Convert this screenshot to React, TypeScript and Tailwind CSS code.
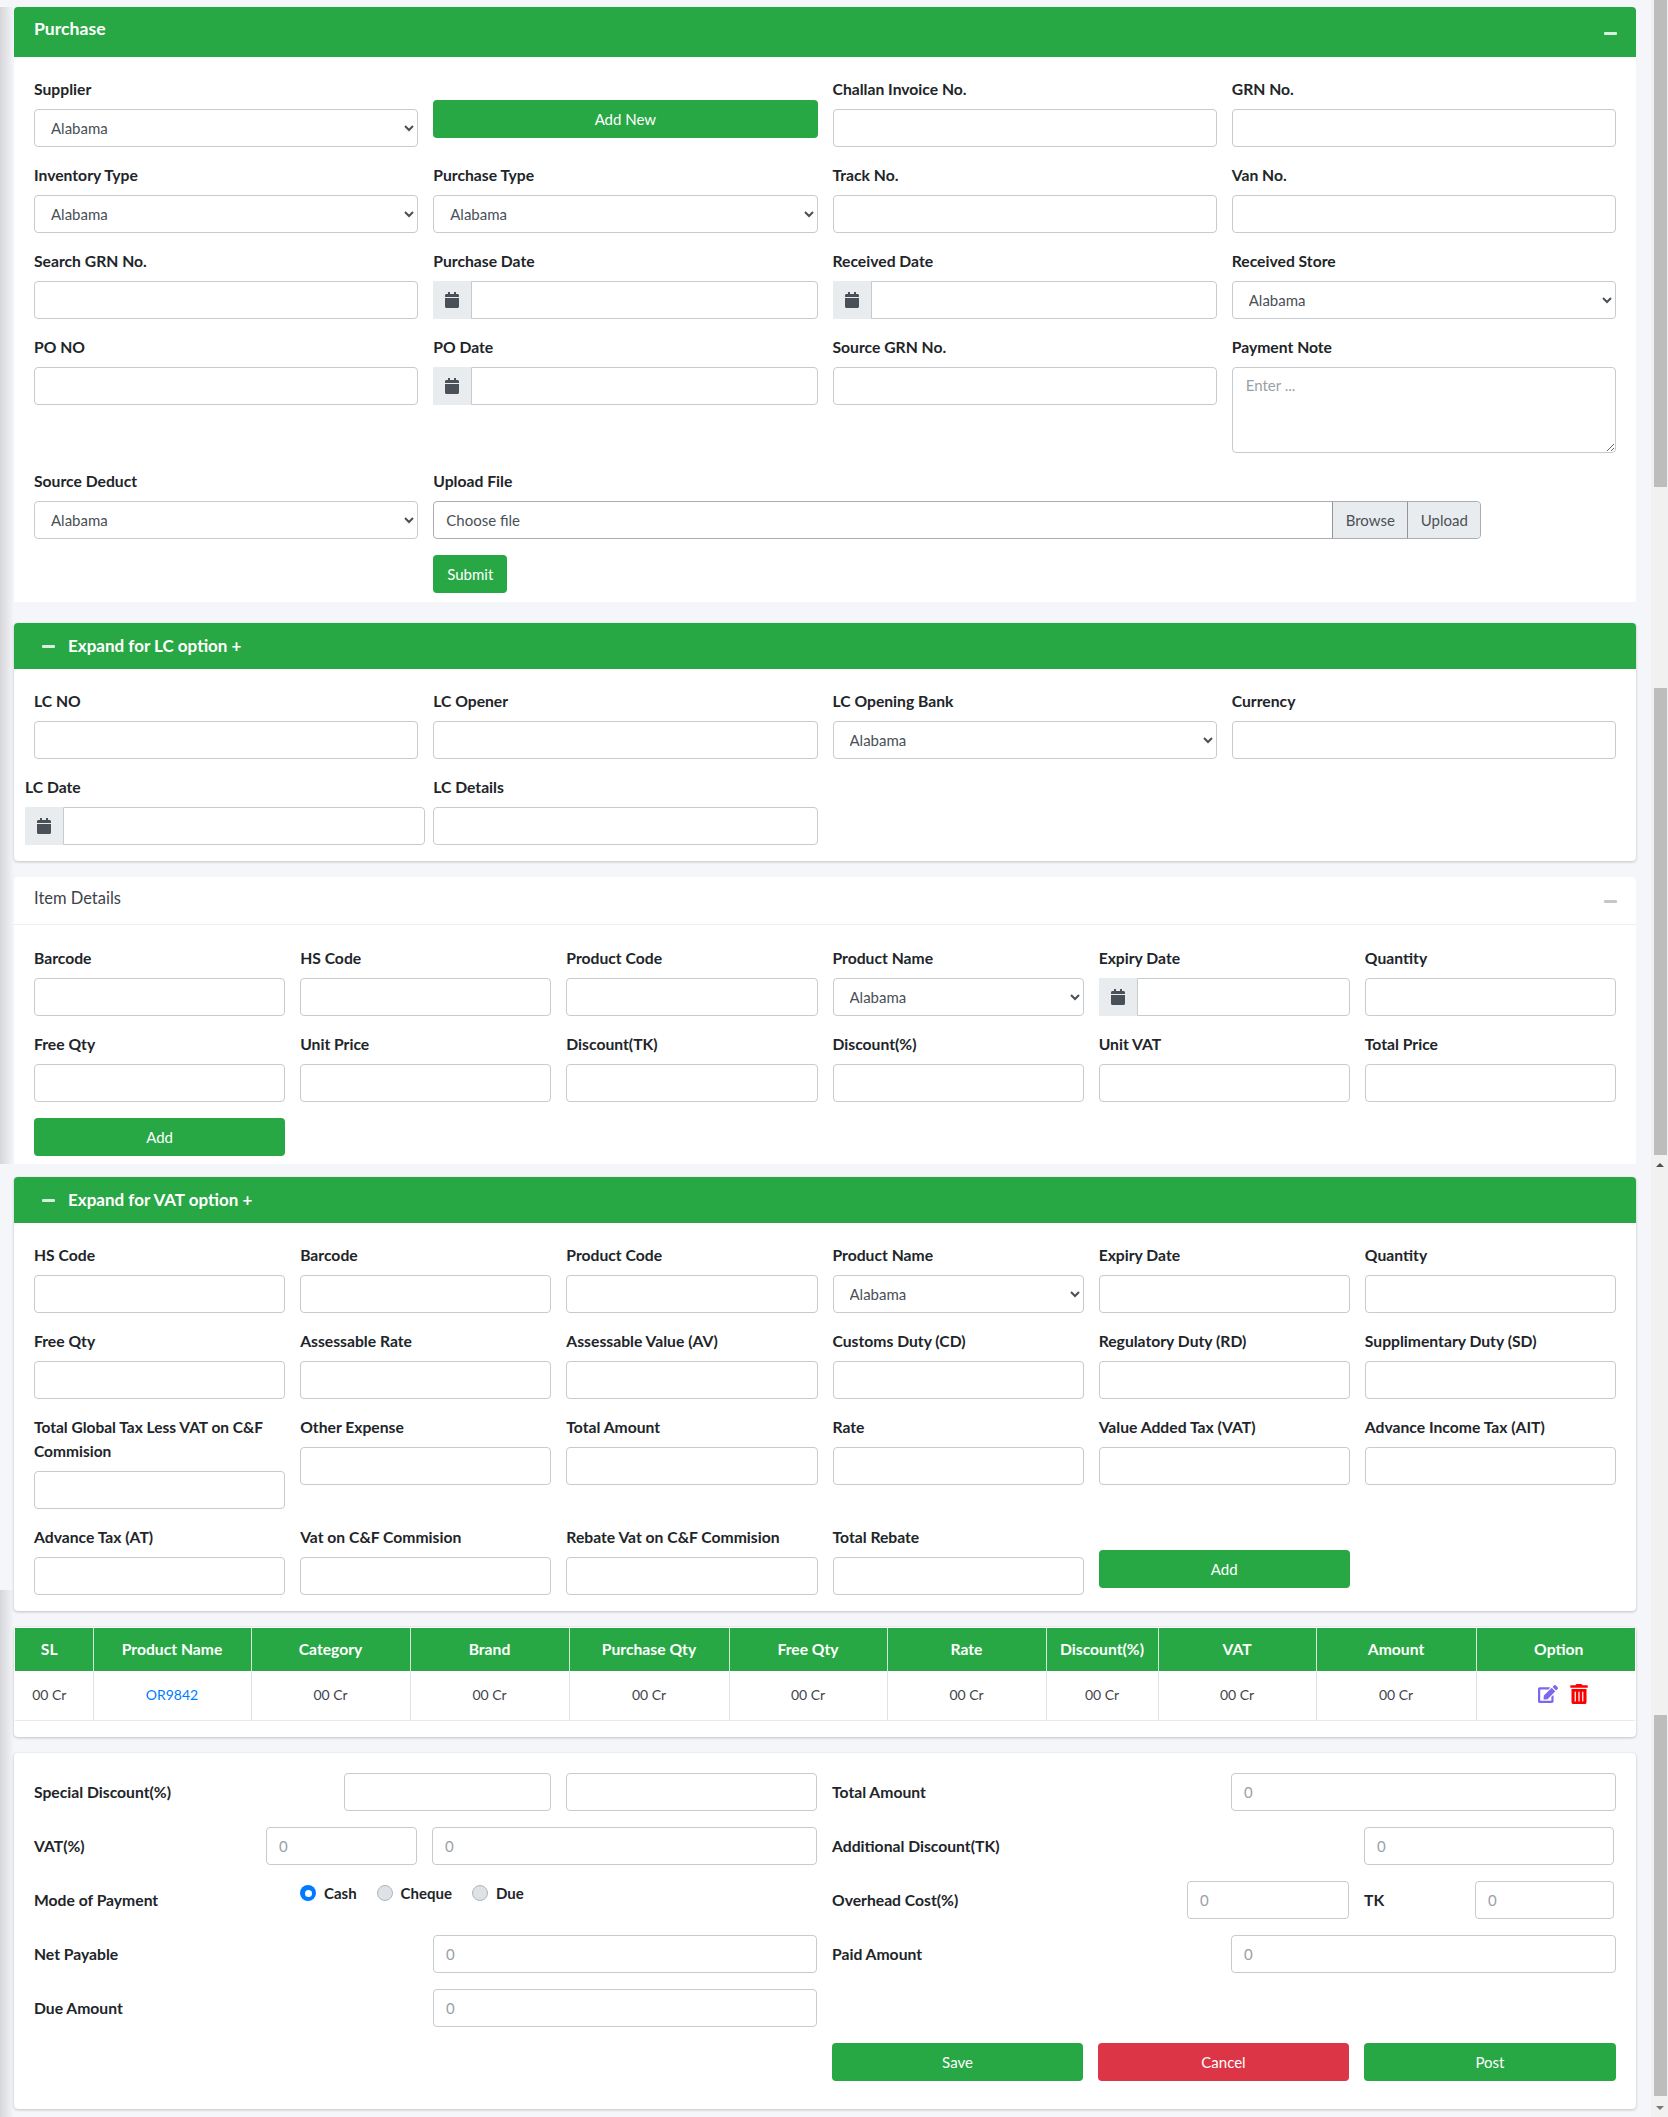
import type { ReactNode } from 'react'
import { FaCalendar, FaEdit, FaTrashAlt } from 'react-icons/fa'

const inputClass =
  'block w-full h-[38px] px-3 bg-white border border-[#c6cbd0] rounded-[4px] text-[15px] text-[#495057] placeholder:text-[#9aa0a6]'

function Label({ children, className = '' }: { children: ReactNode; className?: string }) {
  return <div className={`h-6 mb-2 leading-6 text-[15.7px] font-bold text-[#212529] whitespace-nowrap ${className}`}>{children}</div>
}

function TextInput({ placeholder, className = '' }: { placeholder?: string; className?: string }) {
  return <input type="text" placeholder={placeholder} className={`${inputClass} ${className}`} />
}

function SelectInput() {
  return (
    <select className={inputClass} defaultValue="Alabama">
      <option>Alabama</option>
    </select>
  )
}

function DateInput() {
  return (
    <div className="flex h-[38px]">
      <span className="flex w-[38px] shrink-0 items-center justify-center bg-[#e9ecef] text-[#495057]">
        <FaCalendar size={16} />
      </span>
      <input type="text" className="h-[38px] min-w-0 flex-1 bg-white border border-[#c6cbd0] rounded-r-[4px]" />
    </div>
  )
}

function Field({ label, children, className = '' }: { label?: ReactNode; children?: ReactNode; className?: string }) {
  return (
    <div className={className}>
      <Label>{label}</Label>
      {children ?? <TextInput />}
    </div>
  )
}

function Btn({ children, className = '', red }: { children: ReactNode; className?: string; red?: boolean }) {
  return (
    <button className={`block h-[38px] rounded-[4px] text-[15px] text-white ${red ? 'bg-[#dc3545]' : 'bg-[#28a745]'} ${className}`}>
      {children}
    </button>
  )
}

function Minus({ className }: { className: string }) {
  return <span className={`block w-[13px] h-[3px] rounded-[1px] ${className}`} />
}

function ExpandHeader({ title }: { title: string }) {
  return (
    <div className="flex h-[46px] items-center gap-[13px] pl-7 bg-[#28a745] rounded-t-[4px] text-white text-[17px] font-bold">
      <Minus className="bg-[#d9efdd]" />
      {title}
    </div>
  )
}

const tableCols = [
  ['SL', 'w-[78px] pr-[9px]'],
  ['Product Name', 'w-[158px]'],
  ['Category', 'w-[159px]'],
  ['Brand', 'w-[159px]'],
  ['Purchase Qty', 'w-[160px]'],
  ['Free Qty', 'w-[158px]'],
  ['Rate', 'w-[159px]'],
  ['Discount(%)', 'w-[112px]'],
  ['VAT', 'w-[158px]'],
  ['Amount', 'w-[160px]'],
  ['Option', 'w-[159px] pl-[6px]'],
]

const cardShadow = 'shadow-[0_0_1px_rgba(0,0,0,0.125),0_1px_3px_rgba(0,0,0,0.2)]'

function PurchaseCard() {
  return (
    <section className="mt-[7px] bg-white rounded-t-[4px]">
      <div className="flex h-[50px] items-center justify-between pl-5 pr-[19px] bg-[#28a745] rounded-t-[4px] text-white text-[17.6px] font-bold">
        <span className="-mt-[5px]">Purchase</span>
        <Minus className="bg-[#d9efdd] mt-[2px]" />
      </div>
      <div className="px-5 pt-5 pb-[9px]">
        <div className="grid grid-cols-4 gap-x-[15px] gap-y-4">
          <Field label="Supplier"><SelectInput /></Field>
          <div className="pt-[23px]"><Btn className="w-full">Add New</Btn></div>
          <Field label="Challan Invoice No." />
          <Field label="GRN No." />

          <Field label="Inventory Type"><SelectInput /></Field>
          <Field label="Purchase Type"><SelectInput /></Field>
          <Field label="Track No." />
          <Field label="Van No." />

          <Field label="Search GRN No." />
          <Field label="Purchase Date"><DateInput /></Field>
          <Field label="Received Date"><DateInput /></Field>
          <Field label="Received Store"><SelectInput /></Field>

          <Field label="PO NO" />
          <Field label="PO Date"><DateInput /></Field>
          <Field label="Source GRN No." />
          <Field label="Payment Note">
            <textarea
              placeholder="Enter ..."
              className="block w-full h-[86px] px-[13px] py-[6px] bg-white border border-[#c6cbd0] rounded-[4px] text-[15px] placeholder:text-[#9aa0a6]"
            />
          </Field>

          <Field label="Source Deduct"><SelectInput /></Field>
          <div className="col-span-3">
            <Label>Upload File</Label>
            <div className="flex h-[38px] w-[1048px] border border-[#a9adb3] rounded-[4px] text-[15px] text-[#495057]">
              <span className="flex-1 pl-3 leading-[36px]">Choose file</span>
              <span className="w-[75px] text-center leading-[36px] bg-[#e9ecef] border-l border-[#8f959b]">Browse</span>
              <span className="w-[73px] text-center leading-[36px] bg-[#e9ecef] border-l border-[#8f959b] rounded-r-[4px]">Upload</span>
            </div>
            <Btn className="w-[74px] mt-4">Submit</Btn>
          </div>
        </div>
      </div>
    </section>
  )
}

function LcCard() {
  return (
    <section className={`mt-[21px] bg-white rounded-[4px] ${cardShadow}`}>
      <ExpandHeader title="Expand for LC option +" />
      <div className="px-5 pt-5 pb-4">
        <div className="grid grid-cols-4 gap-x-[15px] gap-y-4">
          <Field label="LC NO" />
          <Field label="LC Opener" />
          <Field label="LC Opening Bank"><SelectInput /></Field>
          <Field label="Currency" />
          <Field label="LC Date" className="-ml-[9px] -mr-[7px]"><DateInput /></Field>
          <Field label="LC Details" />
        </div>
      </div>
    </section>
  )
}

function ItemCard() {
  return (
    <section className="mt-4 bg-white rounded-t-[4px]">
      <div className="flex h-[48px] items-center justify-between pl-5 pr-[19px] pb-1 border-b border-[#edeef0] text-[16.5px] text-[#3d4349]">
        <span>Item Details</span>
        <Minus className="bg-[#c4c7ca] mt-[6px] h-[2px]" />
      </div>
      <div className="px-5 pt-[21px] pb-2">
        <div className="grid grid-cols-6 gap-x-[15px] gap-y-4">
          <Field label="Barcode" />
          <Field label="HS Code" />
          <Field label="Product Code" />
          <Field label="Product Name"><SelectInput /></Field>
          <Field label="Expiry Date"><DateInput /></Field>
          <Field label="Quantity" />
          <Field label="Free Qty" />
          <Field label="Unit Price" />
          <Field label="Discount(TK)" />
          <Field label="Discount(%)" />
          <Field label="Unit VAT" />
          <Field label="Total Price" />
          <Btn className="w-full">Add</Btn>
        </div>
      </div>
    </section>
  )
}

function VatCard() {
  return (
    <section className={`mt-[13px] bg-white rounded-[4px] ${cardShadow}`}>
      <ExpandHeader title="Expand for VAT option +" />
      <div className="px-5 pt-5">
        <div className="grid grid-cols-6 gap-x-[15px] gap-y-4">
          <Field label="HS Code" />
          <Field label="Barcode" />
          <Field label="Product Code" />
          <Field label="Product Name"><SelectInput /></Field>
          <Field label="Expiry Date" />
          <Field label="Quantity" />

          <Field label="Free Qty" />
          <Field label="Assessable Rate" />
          <Field label="Assessable Value (AV)" />
          <Field label="Customs Duty (CD)" />
          <Field label="Regulatory Duty (RD)" />
          <Field label="Supplimentary Duty (SD)" />

          <div>
            <div className="mb-2 text-[15.5px] leading-6 font-bold text-[#212529]">
              Total Global Tax Less VAT on C&amp;F Commision
            </div>
            <TextInput />
          </div>
          <Field label="Other Expense" />
          <Field label="Total Amount" />
          <Field label="Rate" />
          <Field label="Value Added Tax (VAT)" />
          <Field label="Advance Income Tax (AIT)" />

          <Field label="Advance Tax (AT)" />
          <Field label="Vat on C&F Commision" />
          <Field label="Rebate Vat on C&F Commision" />
          <Field label="Total Rebate" />
          <div className="pt-[25px]"><Btn className="w-full">Add</Btn></div>
        </div>
        <div className="h-4" />
      </div>
    </section>
  )
}

function ProductTable() {
  return (
    <section className={`mt-4 pt-px px-px h-[110px] bg-white rounded-[4px] ${cardShadow}`}>
      <table className="w-full table-fixed border-collapse text-center">
        <thead>
          <tr className="h-[43px] bg-[#28a745] text-white text-[15.7px]">
            {tableCols.map(([name, width]) => (
              <th key={name} className={`${width} font-bold border-l first:border-l-0 border-white/80`}>{name}</th>
            ))}
          </tr>
        </thead>
        <tbody>
          <tr className="h-[49px] text-[14px] text-[#3f464d] border-b border-[#e8eaec]">
            {tableCols.map(([name, width]) => (
              <td key={name} className={`${name === 'SL' ? width : ''} pb-[2px] border-l first:border-l-0 border-[#dee2e6]`}>
                {name === 'Product Name' ? (
                  <a href="#" className="text-[#007bff]">OR9842</a>
                ) : name === 'Option' ? (
                  <span className="flex items-center justify-center gap-[11px] pl-[15px]">
                    <FaEdit size={20} className="text-[#7b68ee]" />
                    <FaTrashAlt size={20} className="text-[#ff0000]" />
                  </span>
                ) : (
                  '00 Cr'
                )}
              </td>
            ))}
          </tr>
        </tbody>
      </table>
    </section>
  )
}

function Radio({ label, checked }: { label: string; checked?: boolean }) {
  return (
    <label className="flex h-6 items-center gap-2 text-[15px] font-bold text-[#212529]">
      {checked ? (
        <span className="flex w-4 h-4 items-center justify-center rounded-full bg-[#007bff]">
          <span className="w-[7px] h-[7px] rounded-full bg-white" />
        </span>
      ) : (
        <span className="w-4 h-4 rounded-full bg-[#dee2e6] border border-[#adb5bd]" />
      )}
      {label}
    </label>
  )
}

function RowLabel({ children, className }: { children: ReactNode; className: string }) {
  return <div className={`shrink-0 pt-[2px] text-[15.7px] font-bold text-[#212529] whitespace-nowrap ${className}`}>{children}</div>
}

function TotalsCard() {
  return (
    <section className={`mt-4 h-[356px] px-5 pt-5 bg-white rounded-[4px] ${cardShadow}`}>
      <div className="flex flex-col gap-4">
        <div className="flex items-center gap-[15px]">
          <RowLabel className="w-[295px]">Special Discount(%)</RowLabel>
          <TextInput className="!w-[207px]" />
          <TextInput className="!w-[251px]" />
          <RowLabel className="w-[384px]">Total Amount</RowLabel>
          <TextInput placeholder="0" className="!w-[385px]" />
        </div>
        <div className="flex items-center gap-[15px]">
          <RowLabel className="w-[217px]">VAT(%)</RowLabel>
          <TextInput placeholder="0" className="!w-[151px]" />
          <TextInput placeholder="0" className="!w-[385px]" />
          <RowLabel className="w-[517px]">Additional Discount(TK)</RowLabel>
          <TextInput placeholder="0" className="!w-[250px]" />
        </div>
        <div className="flex items-center gap-[15px]">
          <RowLabel className="w-[251px]">Mode of Payment</RowLabel>
          <div className="flex w-[517px] shrink-0 gap-5 self-start">
            <Radio label="Cash" checked />
            <Radio label="Cheque" />
            <Radio label="Due" />
          </div>
          <RowLabel className="w-[340px]">Overhead Cost(%)</RowLabel>
          <TextInput placeholder="0" className="!w-[162px]" />
          <RowLabel className="w-[96px]">TK</RowLabel>
          <TextInput placeholder="0" className="!w-[139px]" />
        </div>
        <div className="flex items-center gap-[15px]">
          <RowLabel className="w-[384px]">Net Payable</RowLabel>
          <TextInput placeholder="0" className="!w-[384px]" />
          <RowLabel className="w-[384px]">Paid Amount</RowLabel>
          <TextInput placeholder="0" className="!w-[385px]" />
        </div>
        <div className="flex items-center gap-[15px]">
          <RowLabel className="w-[384px]">Due Amount</RowLabel>
          <TextInput placeholder="0" className="!w-[384px]" />
        </div>
        <div className="flex gap-[15px] pl-[798px]">
          <Btn className="w-[251px]">Save</Btn>
          <Btn red className="w-[251px]">Cancel</Btn>
          <Btn className="w-[252px]">Post</Btn>
        </div>
      </div>
    </section>
  )
}

function LeftEdge() {
  const shaded = 'bg-linear-to-r from-[#d6d6da] to-[#f4f6f9]'
  return (
    <div className="flex w-[14px] shrink-0 flex-col">
      <div className="h-[7px]" />
      <div className={`h-[1157px] ${shaded}`} />
      <div className="h-[426px]" />
      <div className={`flex-1 ${shaded}`} />
    </div>
  )
}

// the reference is stitched from three scrolled shots, so the bar shows three thumbs
function ScrollBar() {
  return (
    <div className="flex w-[17px] shrink-0 flex-col items-center bg-[#f1f1f1] pl-[1px]">
      <div className="h-[487px] w-[13px] bg-[#bdbdbd]" />
      <div className="h-[201px]" />
      <div className="h-[467px] w-[13px] bg-[#bdbdbd]" />
      <div className="mt-[8px] h-0 w-0 border-x-[4px] border-b-[4px] border-x-transparent border-b-[#505050]" />
      <div className="h-[548px]" />
      <div className="h-[381px] w-[13px] bg-[#bdbdbd]" />
      <div className="mt-[10px] h-0 w-0 border-x-[4px] border-t-[4px] border-x-transparent border-t-[#7a7a7a]" />
    </div>
  )
}

export default function App() {
  return (
    <div className="flex h-[2117px] w-[1668px] overflow-hidden bg-[#f4f6f9] font-['Lato',sans-serif] text-[#212529]">
      <LeftEdge />
      <main className="w-[1622px] shrink-0">
        <PurchaseCard />
        <LcCard />
        <ItemCard />
        <VatCard />
        <ProductTable />
        <TotalsCard />
      </main>
      <div className="w-[15px] shrink-0" />
      <ScrollBar />
    </div>
  )
}
